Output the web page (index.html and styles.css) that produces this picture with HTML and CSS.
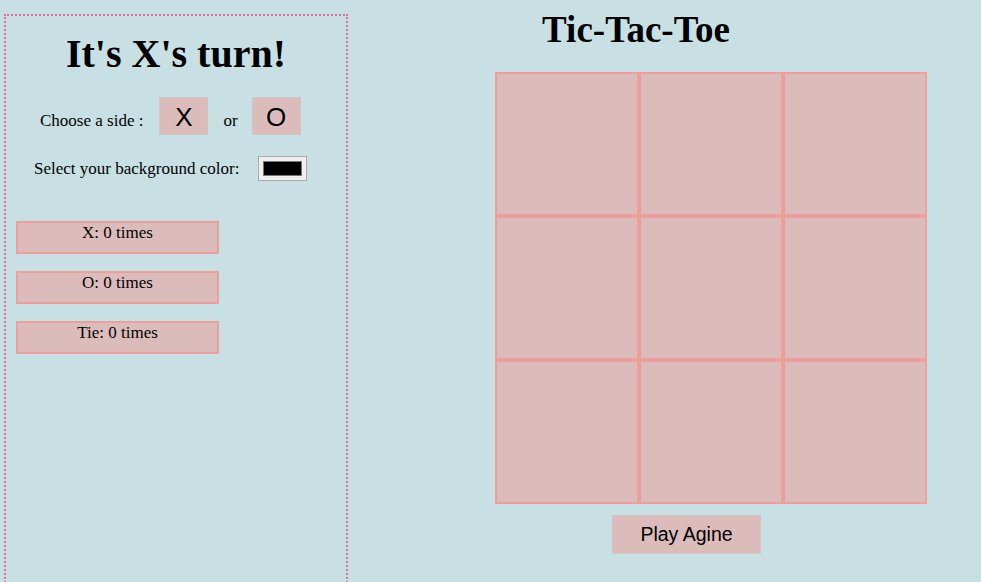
FILE: index.html
```html
<!DOCTYPE html>
<html>
<head>
<meta charset="utf-8">
<title>Tic-Tac-Toe</title>
<link rel="stylesheet" href="styles.css">
</head>
<body>
<div class="page">
  <aside class="panel">
    <h2 class="turn">It's X's turn!</h2>
    <div class="side-row">
      <span class="label">Choose a side :</span>
      <button class="side-btn">X</button>
      <span class="or">or</span>
      <button class="side-btn">O</button>
    </div>
    <div class="color-row">
      <span class="label">Select your background color:</span>
      <input class="color-input" type="color" value="#000000">
    </div>
    <div class="scores">
      <div class="score">X: 0 times</div>
      <div class="score">O: 0 times</div>
      <div class="score">Tie: 0 times</div>
    </div>
  </aside>
  <main class="main">
    <h1 class="title">Tic-Tac-Toe</h1>
    <div class="board">
      <div class="cell"></div><div class="cell"></div><div class="cell"></div>
      <div class="cell"></div><div class="cell"></div><div class="cell"></div>
      <div class="cell"></div><div class="cell"></div><div class="cell"></div>
    </div>
    <div class="actions">
      <button class="again">Play Agine</button>
    </div>
  </main>
</div>
</body>
</html>
```

FILE: styles.css
```css
html, body {
  margin: 0;
  padding: 0;
  background: #c8e0e4;
  height: 100%;
  overflow: hidden;
}
body {
  font-family: "Liberation Serif", "DejaVu Serif", serif;
  color: #000;
}
.page {
  display: flex;
  align-items: flex-start;
}
.panel {
  margin: 14px 0 0 4px;
  width: 340px;
  height: 580px;
  border: 2px dotted #e4709a;
  box-sizing: content-box;
}
.turn {
  margin: 16px 0 0;
  font-size: 40px;
  font-weight: bold;
  text-align: center;
  line-height: 44px;
}
.side-row {
  display: flex;
  align-items: baseline;
  margin: 21px 0 0 34px;
  height: 38px;
}
.label {
  font-size: 17px;
}
.side-row .label {
  margin-right: 16px;
}
.side-btn {
  width: 49px;
  height: 38px;
  background: #dbbcbb;
  border: 1px solid #d0c4c4;
  font-family: "Liberation Sans", Arial, sans-serif;
  font-size: 26px;
  padding: 3px 0 0;
  color: #000;
}
.or {
  font-size: 17px;
  margin: 0 14px 0 15px;
}
.color-row {
  display: flex;
  align-items: center;
  margin: 21px 0 0 28px;
  height: 25px;
}
.color-row .label {
  margin-right: 19px;
}
.color-input {
  -webkit-appearance: none;
  appearance: none;
  width: 49px;
  height: 25px;
  padding: 0;
  margin: 0;
  background: #efefef;
  border: 1px solid #aaa;
  box-sizing: border-box;
}
.color-input::-webkit-color-swatch-wrapper {
  padding: 4px;
}
.color-input::-webkit-color-swatch {
  border: 1px solid #777;
  border-radius: 0;
}
.scores {
  display: flex;
  flex-direction: column;
  gap: 17px;
  margin: 40px 0 0 10px;
}
.score {
  width: 199px;
  height: 29px;
  background: #dbbcbb;
  border: 2px solid #ee9f9c;
  text-align: center;
  font-size: 17px;
  line-height: 20px;
}
.main {
  display: flex;
  flex-direction: column;
  width: 633px;
}
.title {
  margin: 10px 0 0;
  width: 576px;
  text-align: center;
  font-size: 37px;
  line-height: 40px;
  font-weight: bold;
}
.board {
  margin: 22px 0 0 147px;
  display: grid;
  grid-template-columns: repeat(3, 144px);
  grid-template-rows: repeat(3, 144px);
  width: 432px;
}
.cell {
  background: #dbbcbb;
  border: 2px solid #ee9f9c;
}
.actions {
  display: flex;
  margin: 11px 0 0 264px;
}
.again {
  width: 149px;
  height: 39px;
  background: #dbbcbb;
  border: 1px solid #d0c4c4;
  font-family: "Liberation Sans", Arial, sans-serif;
  font-size: 19.5px;
  color: #000;
  padding: 0;
}
```
